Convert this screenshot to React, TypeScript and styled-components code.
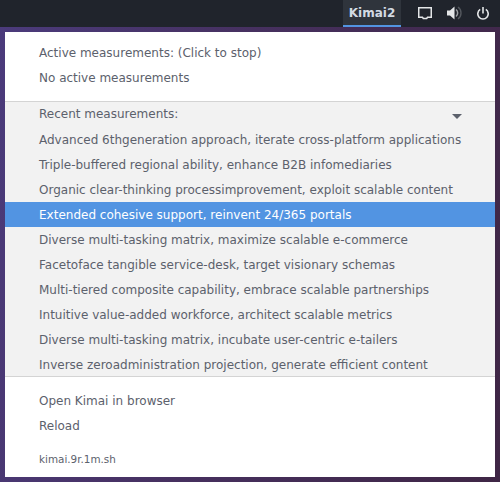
import React from 'react';
import styled, { createGlobalStyle } from 'styled-components';

const GlobalStyle = createGlobalStyle`
  html, body {
    margin: 0;
    padding: 0;
    width: 500px;
    height: 482px;
    overflow: hidden;
  }
  body {
    font-family: 'DejaVu Sans', sans-serif;
    font-variant-ligatures: common-ligatures;
    text-rendering: optimizeLegibility;
  }
`;

const Desktop = styled.div`
  width: 500px;
  height: 482px;
  display: flex;
  flex-direction: column;
  background: linear-gradient(100deg, #4b3b7c 0%, #46305f 45%, #3f2645 100%);
`;

const TopBar = styled.header`
  height: 27px;
  flex: none;
  display: flex;
  justify-content: flex-end;
  background-color: #20242c;
`;

const AppButton = styled.div`
  width: 58px;
  height: 25px;
  display: flex;
  align-items: center;
  justify-content: center;
  background-color: #2f343c;
  border-bottom: 2px solid #5294e2;
  color: #d3dae3;
  font-size: 12px;
  font-weight: 700;
`;

const Tray = styled.div`
  display: flex;
  align-items: center;
  gap: 15px;
  padding: 0 11px 1px 17px;
  color: #e4e6e8;
`;

const Popup = styled.main`
  width: 490px;
  height: 445px;
  margin: 5px 5px 0;
  display: flex;
  flex-direction: column;
  background-color: #ffffff;
  color: #5c616c;
  font-size: 12px;
`;

const TopSection = styled.section`
  height: 69px;
  flex: none;
  padding-top: 8px;
  box-sizing: border-box;
`;

const RecentSection = styled.section`
  height: 276px;
  flex: none;
  background-color: #f2f2f2;
  border-top: 1px solid #d4d4d4;
  border-bottom: 1px solid #d4d4d4;
  box-sizing: border-box;
`;

const BottomSection = styled.section`
  flex: 1;
  padding-top: 11px;
`;

const Row = styled.div<{ $active?: boolean }>`
  height: 25px;
  display: flex;
  align-items: center;
  justify-content: space-between;
  padding: 0 33px 0 34px;
  white-space: nowrap;
  background-color: ${(p) => (p.$active ? '#5294e2' : 'transparent')};
  color: ${(p) => (p.$active ? '#ffffff' : 'inherit')};
`;

const HeaderRow = styled(Row)`
  padding-bottom: 2px;
  box-sizing: border-box;
`;

const Footer = styled(Row)`
  height: 24px;
  margin-top: 9px;
  font-size: 10.4px;
`;

const Arrow = styled.span`
  width: 0;
  height: 0;
  margin-top: 5px;
  border-left: 5px solid transparent;
  border-right: 5px solid transparent;
  border-top: 5px solid #5c616c;
`;

const recent = [
  'Advanced 6thgeneration approach, iterate cross-platform applications',
  'Triple-buffered regional ability, enhance B2B infomediaries',
  'Organic clear-thinking processimprovement, exploit scalable content',
  'Extended cohesive support, reinvent 24/365 portals',
  'Diverse multi-tasking matrix, maximize scalable e-commerce',
  'Facetoface tangible service-desk, target visionary schemas',
  'Multi-tiered composite capability, embrace scalable partnerships',
  'Intuitive value-added workforce, architect scalable metrics',
  'Diverse multi-tasking matrix, incubate user-centric e-tailers',
  'Inverse zeroadministration projection, generate efficient content',
];

const App: React.FC = () => {
  return (
    <Desktop>
      <GlobalStyle />
      <TopBar>
        <AppButton>Kimai2</AppButton>
        <Tray>
          <svg width="14" height="13" viewBox="0 0 14 13" fill="none">
            <path d="M.75.75h12.5v9.5H9.5l-.8 1.2H5.3l-.8-1.2H.75z" stroke="currentColor" strokeWidth="1.5" />
          </svg>
          <svg width="15" height="14" viewBox="0 0 15 14" fill="none">
            <path d="M0 4.5h3L7.5 .5v13L3 9.5H0z" fill="currentColor" />
            <path d="M9 3.5a4.5 4.5 0 0 1 0 7" stroke="#9a9da1" strokeWidth="1.5" />
            <path d="M11 1a7.5 7.5 0 0 1 0 12" stroke="#54585e" strokeWidth="1.4" />
          </svg>
          <svg width="12" height="13" viewBox="0 0 12 13" fill="none">
            <path d="M6 0v6.5" stroke="currentColor" strokeWidth="1.6" />
            <path d="M3.2 2.4a5.2 5.2 0 1 0 5.6 0" stroke="currentColor" strokeWidth="1.6" />
          </svg>
        </Tray>
      </TopBar>
      <Popup>
        <TopSection>
          <Row>Active measurements: (Click to stop)</Row>
          <Row>No active measurements</Row>
        </TopSection>
        <RecentSection>
          <HeaderRow>
            Recent measurements:
            <Arrow />
          </HeaderRow>
          {recent.map((name, i) => (
            <Row key={name} $active={i === 3}>
              {name}
            </Row>
          ))}
        </RecentSection>
        <BottomSection>
          <Row>Open Kimai in browser</Row>
          <Row>Reload</Row>
          <Footer>kimai.9r.1m.sh</Footer>
        </BottomSection>
      </Popup>
    </Desktop>
  );
};

export default App;
